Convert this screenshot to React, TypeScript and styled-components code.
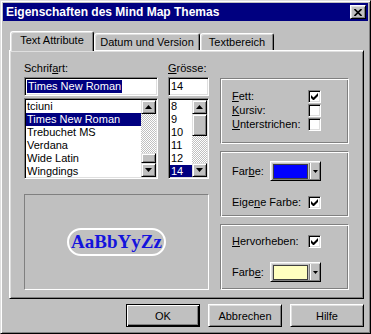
import React from "react";
import styled, { createGlobalStyle, css } from "styled-components";

const GlobalStyle = createGlobalStyle`
  html, body {
    margin: 0;
    padding: 0;
    background: #c0c0c0;
    overflow: hidden;
  }
  body {
    font-family: "Liberation Sans", Arial, sans-serif;
    font-size: 11px;
    color: #000;
  }
`;

// Win98 style bevels
const raised = css`
  border: 1px solid;
  border-color: #fff #000 #000 #fff;
  box-shadow: inset 1px 1px #dfdfdf, inset -1px -1px #808080;
`;

const sunken = css`
  border: 1px solid;
  border-color: #808080 #fff #fff #808080;
  box-shadow: inset 1px 1px #000, inset -1px -1px #dfdfdf;
`;

const etched = css`
  border: 1px solid;
  border-color: #808080 #fff #fff #808080;
  box-shadow: inset 1px 1px #fff, inset -1px -1px #808080;
`;

const Window = styled.div`
  width: 371px;
  height: 334px;
  box-sizing: border-box;
  background: #c0c0c0;
  border: 1px solid;
  border-color: #dfdfdf #000 #000 #dfdfdf;
  box-shadow: inset 1px 1px #fff, inset -1px -1px #808080;
  padding: 2px;
  display: flex;
  flex-direction: column;
`;

const TitleBar = styled.div`
  height: 18px;
  background: #000080;
  color: #fff;
  display: flex;
  align-items: center;
  justify-content: space-between;
  padding: 0 2px 0 3px;
  font-weight: bold;
  font-size: 12px;
`;

const CloseButton = styled.div`
  width: 16px;
  height: 14px;
  box-sizing: border-box;
  background: #c0c0c0;
  ${raised};
  display: flex;
  align-items: center;
  justify-content: center;
`;

const Body = styled.div`
  padding: 10px 4px 0 6px;
  display: flex;
  flex-direction: column;
`;

const TabRow = styled.div`
  display: flex;
  align-items: flex-end;
  height: 19px;
  padding-left: 1px;
  position: relative;
  z-index: 1;
`;

const Tab = styled.div<{ $active?: boolean; $w: number }>`
  width: ${(p) => p.$w}px;
  height: ${(p) => (p.$active ? 20 : 17)}px;
  margin-bottom: ${(p) => (p.$active ? -1 : 0)}px;
  box-sizing: border-box;
  background: #c0c0c0;
  border: 1px solid;
  border-color: #fff #000 transparent #fff;
  border-bottom: none;
  border-radius: 3px 3px 0 0;
  box-shadow: inset 1px 1px #dfdfdf, inset -1px 0 #808080;
  padding-top: 2px;
  line-height: 13px;
  text-align: center;
`;

const Panel = styled.div`
  height: 249px;
  box-sizing: border-box;
  border: 1px solid;
  border-color: #fff #000 #000 #fff;
  box-shadow: inset 1px 1px #dfdfdf, inset -1px -1px #808080;
  padding: 11px 13px 0 14px;
  display: flex;
  gap: 11px;
`;

const LeftArea = styled.div`
  width: 185px;
  display: flex;
  flex-direction: column;
`;

const Fields = styled.div`
  display: flex;
  gap: 10px;
`;

const Column = styled.div<{ $w: number }>`
  width: ${(p) => p.$w}px;
  display: flex;
  flex-direction: column;
`;

const Label = styled.div`
  height: 13px;
  line-height: 13px;
  margin-bottom: 2px;
`;

const TextBox = styled.div`
  height: 19px;
  box-sizing: border-box;
  ${sunken};
  background: #fff;
  padding: 0 2px;
  display: flex;
  align-items: center;
  line-height: 13px;
`;

const Selection = styled.span`
  background: #000080;
  color: #fff;
  padding: 0 1px;
`;

const ListFrame = styled.div`
  margin-top: 2px;
  height: 81px;
  box-sizing: border-box;
  ${sunken};
  padding: 1px;
  background: #fff;
  display: flex;
  overflow: hidden;
`;

const Items = styled.div`
  flex: 1;
  overflow: hidden;
`;

const Item = styled.div<{ $sel?: boolean }>`
  height: 13px;
  line-height: 13px;
  padding-left: 1px;
  white-space: nowrap;
  background: ${(p) => (p.$sel ? "#000080" : "transparent")};
  color: ${(p) => (p.$sel ? "#fff" : "#000")};
`;

const ScrollBar = styled.div`
  width: 15px;
  display: flex;
  flex-direction: column;
`;

const ScrollButton = styled.div<{ $h: number }>`
  height: ${(p) => p.$h}px;
  flex-shrink: 0;
  box-sizing: border-box;
  background: #c0c0c0;
  border: 1px solid;
  border-color: #dfdfdf #000 #000 #dfdfdf;
  box-shadow: inset 1px 1px #fff, inset -1px -1px #808080;
  display: flex;
  align-items: center;
  justify-content: center;
`;

const Track = styled.div<{ $end?: boolean }>`
  flex: 1;
  display: flex;
  flex-direction: column;
  justify-content: ${(p) => (p.$end ? "flex-end" : "flex-start")};
  background-image: repeating-conic-gradient(#c0c0c0 0% 25%, #fff 0% 50%);
  background-size: 2px 2px;
`;

const Preview = styled.div`
  margin-top: 15px;
  height: 96px;
  box-sizing: border-box;
  border: 1px solid;
  border-color: #808080 #fff #fff #808080;
  display: flex;
  align-items: center;
  justify-content: center;
`;

const Sample = styled.span`
  font-family: "Liberation Serif", "Times New Roman", serif;
  font-weight: bold;
  font-size: 19px;
  line-height: 22px;
  color: #1414dc;
  border: 2px solid #fff;
  border-radius: 14px;
  padding: 1px 2px;
`;

const RightCol = styled.div`
  width: 129px;
  margin-top: 16px;
  display: flex;
  flex-direction: column;
  gap: 7px;
`;

const Group = styled.div<{ $top: number; $gap: number }>`
  height: 66px;
  box-sizing: border-box;
  ${etched};
  padding: ${(p) => p.$top}px 0 0 11px;
  display: flex;
  flex-direction: column;
  gap: ${(p) => p.$gap}px;
`;

const Row = styled.div<{ $h: number }>`
  height: ${(p) => p.$h}px;
  display: flex;
  align-items: center;
`;

const RowLabel = styled.span<{ $w: number }>`
  width: ${(p) => p.$w}px;
  line-height: 13px;
  white-space: nowrap;
`;

const CheckBox = styled.span`
  width: 13px;
  height: 13px;
  box-sizing: border-box;
  ${sunken};
  background: #fff;
  display: flex;
  align-items: center;
  justify-content: center;
`;

const ColorButton = styled.div`
  width: 51px;
  height: 20px;
  box-sizing: border-box;
  ${raised};
  background: #c0c0c0;
  padding: 0 0 0 2px;
  display: flex;
  align-items: center;
`;

const Swatch = styled.span<{ $color: string }>`
  width: 35px;
  height: 15px;
  box-sizing: border-box;
  border: 1px solid #404040;
  background: ${(p) => p.$color};
`;

const DropPart = styled.span`
  flex: 1;
  height: 16px;
  margin-left: 1px;
  border-left: 1px solid #808080;
  box-shadow: inset 1px 0 #fff;
  display: flex;
  align-items: center;
  justify-content: center;
`;

const ButtonRow = styled.div`
  margin-top: 5px;
  display: flex;
  justify-content: flex-end;
  gap: 8px;
`;

const PushButton = styled.button<{ $default?: boolean }>`
  width: 74px;
  height: 23px;
  box-sizing: border-box;
  font-family: "Liberation Sans", Arial, sans-serif;
  font-size: 11px;
  color: #000;
  background: #c0c0c0;
  padding: 0;
  ${(p) =>
    p.$default
      ? css`
          border: 1px solid #000;
          box-shadow: inset 1px 1px #fff, inset -1px -1px #000, inset -2px -2px #808080;
        `
      : raised};
`;

const UpArrow = () => (
  <svg width="7" height="4" viewBox="0 0 7 4">
    <polygon points="0,4 3.5,0 7,4" fill="#000" />
  </svg>
);

const DownArrow = ({ w = 7, h = 4 }: { w?: number; h?: number }) => (
  <svg width={w} height={h} viewBox={`0 0 ${w} ${h}`}>
    <polygon points={`0,0 ${w},0 ${w / 2},${h}`} fill="#000" />
  </svg>
);

const Check = () => (
  <svg width="7" height="7" viewBox="0 0 7 7">
    <path d="M0 2 L2.5 4.5 L7 0 V3 L2.5 7.5 L0 5 Z" fill="#000" />
  </svg>
);

type ListProps = {
  items: string[];
  selected: number;
  width: number;
  thumbH: number;
  thumbAtEnd?: boolean;
};

const ListBox: React.FC<ListProps> = ({ items, selected, thumbH, thumbAtEnd }) => (
  <ListFrame>
    <Items>
      {items.map((it, i) => (
        <Item key={it} $sel={i === selected}>
          {it}
        </Item>
      ))}
    </Items>
    <ScrollBar>
      <ScrollButton $h={14}>
        <UpArrow />
      </ScrollButton>
      <Track $end={thumbAtEnd}>
        <ScrollButton $h={thumbH} />
      </Track>
      <ScrollButton $h={14}>
        <DownArrow />
      </ScrollButton>
    </ScrollBar>
  </ListFrame>
);

const fonts = ["tciuni", "Times New Roman", "Trebuchet MS", "Verdana", "Wide Latin", "Wingdings"];
const sizes = ["8", "9", "10", "11", "12", "14"];

const App: React.FC = () => {
  return (
    <>
      <GlobalStyle />
      <Window>
        <TitleBar>
          <span>Eigenschaften des Mind Map Themas</span>
          <CloseButton>
            <svg width="8" height="7" viewBox="0 0 8 7">
              <path d="M0.5 0 L7.5 7 M7.5 0 L0.5 7" stroke="#000" strokeWidth="1.6" />
            </svg>
          </CloseButton>
        </TitleBar>

        <Body>
          <TabRow>
            <Tab $active $w={84}>Text Attribute</Tab>
            <Tab $w={106}>Datum und Version</Tab>
            <Tab $w={74}>Textbereich</Tab>
          </TabRow>

          <Panel>
            <LeftArea>
              <Fields>
                <Column $w={134}>
                  <Label>
                    Schrif<u>a</u>rt:
                  </Label>
                  <TextBox>
                    <Selection>Times New Roman</Selection>
                  </TextBox>
                  <ListBox items={fonts} selected={1} width={134} thumbH={10} thumbAtEnd />
                </Column>
                <Column $w={41}>
                  <Label>
                    <u>G</u>rösse:
                  </Label>
                  <TextBox>14</TextBox>
                  <ListBox items={sizes} selected={5} width={41} thumbH={22} />
                </Column>
              </Fields>
              <Preview>
                <Sample>AaBbYyZz</Sample>
              </Preview>
            </LeftArea>

            <RightCol>
              <Group $top={11} $gap={1}>
                <Row $h={13}>
                  <RowLabel $w={76}>
                    <u>F</u>ett:
                  </RowLabel>
                  <CheckBox>
                    <Check />
                  </CheckBox>
                </Row>
                <Row $h={13}>
                  <RowLabel $w={76}>
                    <u>K</u>ursiv:
                  </RowLabel>
                  <CheckBox />
                </Row>
                <Row $h={13}>
                  <RowLabel $w={76}>
                    <u>U</u>nterstrichen:
                  </RowLabel>
                  <CheckBox />
                </Row>
              </Group>

              <Group $top={9} $gap={15}>
                <Row $h={20}>
                  <RowLabel $w={38}>
                    Far<u>b</u>e:
                  </RowLabel>
                  <ColorButton>
                    <Swatch $color="#0000ff" />
                    <DropPart>
                      <DownArrow w={5} h={3} />
                    </DropPart>
                  </ColorButton>
                </Row>
                <Row $h={13}>
                  <RowLabel $w={76}>
                    Eige<u>n</u>e Farbe:
                  </RowLabel>
                  <CheckBox>
                    <Check />
                  </CheckBox>
                </Row>
              </Group>

              <Group $top={10} $gap={14}>
                <Row $h={13}>
                  <RowLabel $w={76}>
                    <u>H</u>ervorheben:
                  </RowLabel>
                  <CheckBox>
                    <Check />
                  </CheckBox>
                </Row>
                <Row $h={20}>
                  <RowLabel $w={38}>
                    Farb<u>e</u>:
                  </RowLabel>
                  <ColorButton>
                    <Swatch $color="#ffffc0" />
                    <DropPart>
                      <DownArrow w={5} h={3} />
                    </DropPart>
                  </ColorButton>
                </Row>
              </Group>
            </RightCol>
          </Panel>

          <ButtonRow>
            <PushButton $default>OK</PushButton>
            <PushButton>Abbrechen</PushButton>
            <PushButton>Hilfe</PushButton>
          </ButtonRow>
        </Body>
      </Window>
    </>
  );
};

export default App;
